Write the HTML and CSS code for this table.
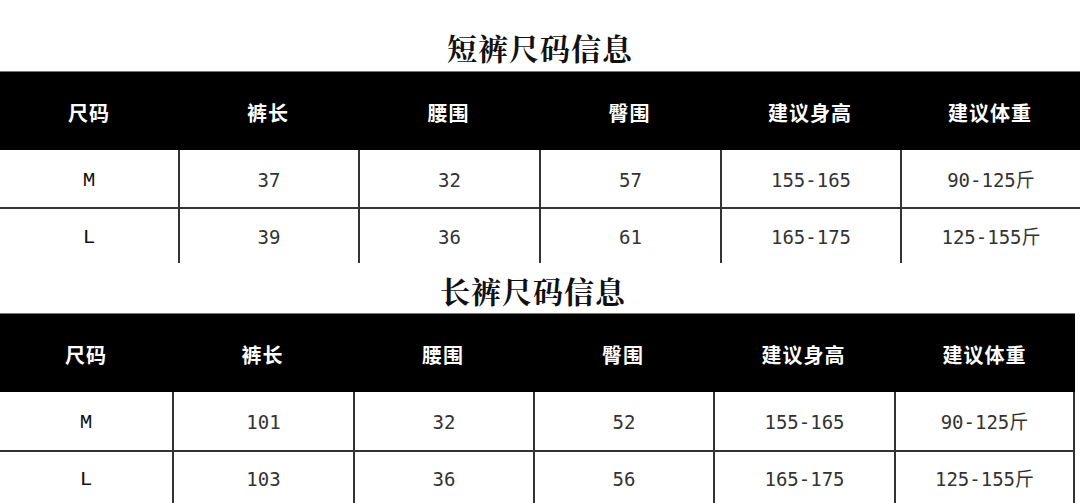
FILE: index.html
```html
<!DOCTYPE html>
<html lang="zh-CN">
<head>
<meta charset="utf-8">
<title>尺码信息</title>
<link rel="stylesheet" href="styles.css">
</head>
<body>
<div class="page">
  <h2 class="title title-short">短裤尺码信息</h2>
  <div class="table t1">
    <div class="th">尺码</div><div class="th">裤长</div><div class="th">腰围</div><div class="th">臀围</div><div class="th">建议身高</div><div class="th">建议体重</div>
    <div class="td size r1">M</div><div class="td r1">37</div><div class="td r1">32</div><div class="td r1">57</div><div class="td r1">155-165</div><div class="td r1">90-125斤</div>
    <div class="td size r2">L</div><div class="td r2">39</div><div class="td r2">36</div><div class="td r2">61</div><div class="td r2">165-175</div><div class="td r2">125-155斤</div>
  </div>
  <h2 class="title title-long">长裤尺码信息</h2>
  <div class="table t2">
    <div class="th">尺码</div><div class="th">裤长</div><div class="th">腰围</div><div class="th">臀围</div><div class="th">建议身高</div><div class="th">建议体重</div>
    <div class="td size r1">M</div><div class="td r1">101</div><div class="td r1">32</div><div class="td r1">52</div><div class="td r1">155-165</div><div class="td r1">90-125斤</div>
    <div class="td size r2">L</div><div class="td r2">103</div><div class="td r2">36</div><div class="td r2">56</div><div class="td r2">165-175</div><div class="td r2">125-155斤</div>
  </div>
</div>
</body>
</html>
```

FILE: styles.css
```css
* { box-sizing: border-box; margin: 0; padding: 0; }
html, body { background: #fff; }
body { width: 1080px; height: 503px; overflow: hidden; font-family: "DejaVu Sans Mono", "Noto Sans CJK SC", monospace; }

.page { display: flex; flex-direction: column; }

.title {
  display: flex; align-items: center; justify-content: center;
  font-family: "Noto Serif CJK SC", "Noto Sans CJK SC", serif;
  font-weight: 700; font-size: 30px; color: #111; letter-spacing: 1px;
}
.title-short { height: 71px; padding-top: 22px; }
.title-long { height: 50px; padding-top: 3px; padding-right: 14px; }

.table { display: grid; }
.t1 { width: 1080px; grid-template-columns: 178px 180px 181px 181px 180px 180px; grid-template-rows: 79px 57px 56px; }
.t2 { width: 1075px; grid-template-columns: 172px 181px 180px 180px 181px 181px; grid-template-rows: 79px 58px 53px; }

.th {
  background: #000; color: #fff;
  display: flex; align-items: center; justify-content: center;
  font-family: "Noto Sans CJK SC", sans-serif; font-weight: 700; font-size: 20px;
  border-top: 1px solid #777; letter-spacing: 1px; padding-top: 2px;
}

.td {
  display: flex; align-items: center; justify-content: center;
  color: #333; font-size: 19px; line-height: 1; padding-top: 3px;
  border-left: 2px solid #333;
}
.td.size { border-left: none; font-family: "Liberation Mono", monospace; font-size: 21px; color: #111; }
.td.r2 { border-top: 2px solid #333; }
.t2 .td:nth-child(6n) { border-right: 2px solid #333; }
```
